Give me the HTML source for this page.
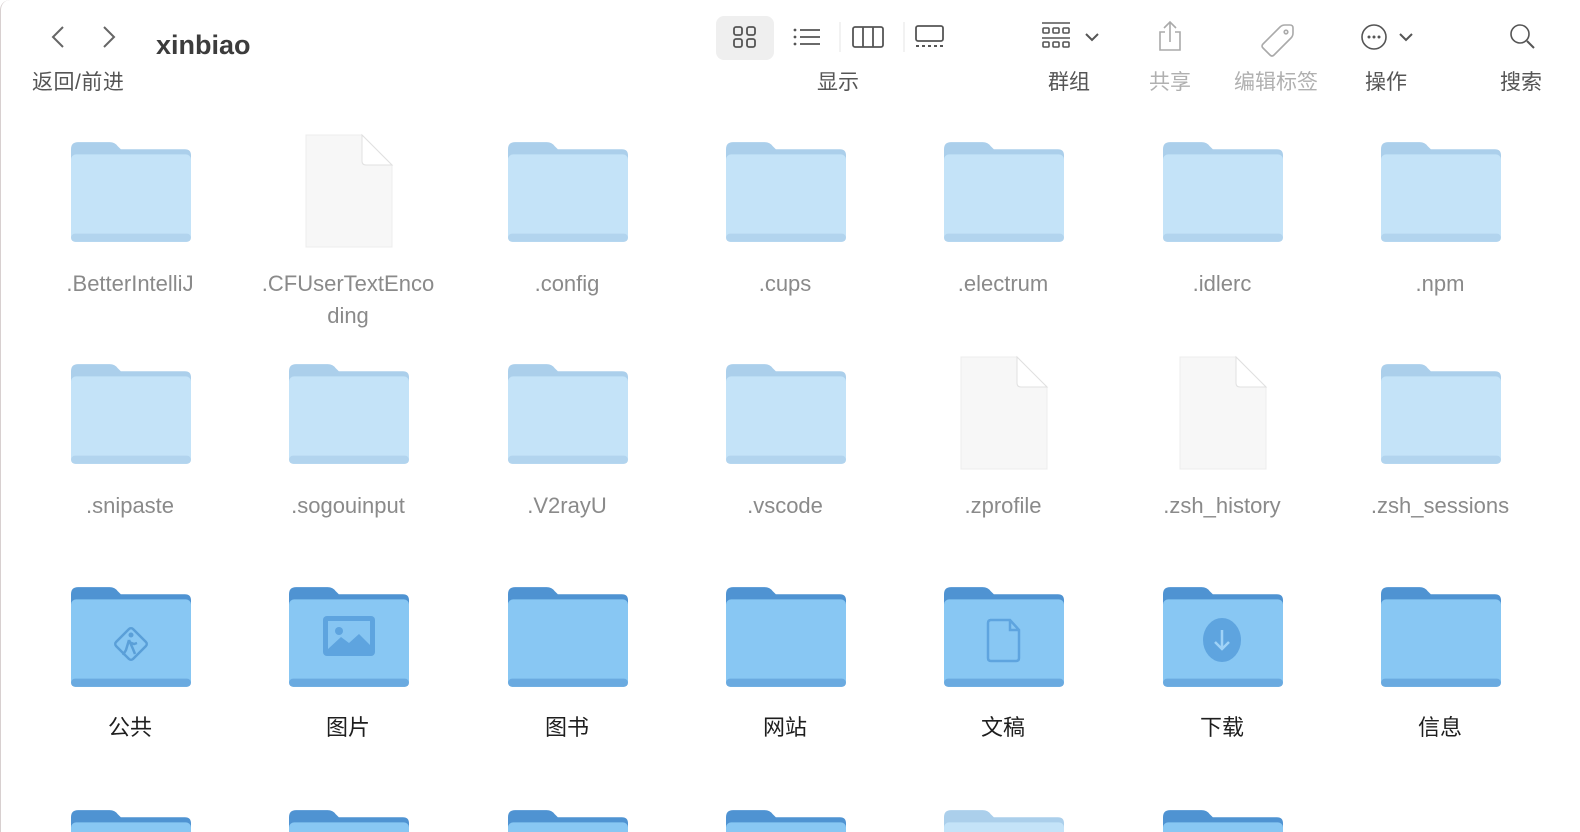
<!DOCTYPE html>
<html><head><meta charset="utf-8"><style>
*{margin:0;padding:0;box-sizing:border-box}
html,body{width:1580px;height:832px;overflow:hidden}
body{background:#fff;position:relative;font-family:"Liberation Sans","Noto Sans CJK SC",sans-serif}
.win{position:absolute;left:0;top:0;width:1580px;height:832px;border-left:1px solid #d8d0d0;border-top-left-radius:10px}
.a{position:absolute}
.lbl{position:absolute;width:200px;text-align:center;font-size:22px;line-height:32px}
.g{color:#8a8a8a}.d{color:#1e1e1e}
.tl{position:absolute;font-size:20px;color:#555;text-align:center;width:100px}
</style></head><body><div class="win"></div>
<svg width="0" height="0" style="position:absolute">
<defs>
<symbol id="fl" viewBox="0 0 118 104">
<path d="M0,9 Q0,2 7,2 H38 Q43,2 46,6 L49,9 H112 Q118,9 118,15 V92 H0 Z" fill="#abcfeb"/>
<rect x="0" y="14" width="118" height="86" rx="5" fill="#c4e3f8"/>
<rect x="0" y="92" width="118" height="8" rx="4" fill="#b2d4ee"/>
</symbol>
<symbol id="fd" viewBox="0 0 118 104">
<path d="M0,9 Q0,2 7,2 H38 Q43,2 46,6 L49,9 H112 Q118,9 118,15 V92 H0 Z" fill="#4f93d2"/>
<rect x="0" y="14" width="118" height="86" rx="5" fill="#88c7f3"/>
<rect x="0" y="92" width="118" height="8" rx="4" fill="#6aaae0"/>
</symbol>
<symbol id="doc" viewBox="0 0 90 116">
<path d="M2,2 H58 L88,32 V114 H2 Z" fill="#f7f7f7" stroke="#ececec"/>
<path d="M58,2 V28 Q58,32 62,32 H88 Z" fill="#fff" stroke="#e0e0e0"/>
</symbol>
</defs></svg>

<!-- toolbar -->
<svg class="a" style="left:46px;top:24px" width="80" height="28"><path d="M17,3 L7,13 L17,23" stroke="#666" stroke-width="2" fill="none"/><path d="M58,3 L68,13 L58,23" stroke="#666" stroke-width="2" fill="none"/></svg>
<div class="a" style="left:156px;top:30px;font-size:27px;font-weight:bold;color:#3c3c3c">xinbiao</div>
<div class="a" style="left:32px;top:66px;font-size:21px;color:#555;letter-spacing:0.5px">返回/前进</div>

<div class="a" style="left:716px;top:16px;width:58px;height:44px;background:#efefef;border-radius:8px"></div>
<svg class="a" style="left:700px;top:0" width="260" height="70">
<g stroke="#555" stroke-width="1.8" fill="none">
<rect x="34" y="27" width="8" height="8" rx="2"/><rect x="47" y="27" width="8" height="8" rx="2"/><rect x="34" y="39" width="8" height="8" rx="2"/><rect x="47" y="39" width="8" height="8" rx="2"/>
<path d="M100,30 H120 M100,37 H120 M100,44 H120"/>
<rect x="153" y="27" width="30" height="20" rx="2"/><path d="M163,27 V47 M173,27 V47"/>
<rect x="216" y="26" width="27" height="15" rx="2"/>
</g>
<g fill="#555"><circle cx="95" cy="30" r="1.4"/><circle cx="95" cy="37" r="1.4"/><circle cx="95" cy="44" r="1.4"/>
<rect x="216" y="45" width="3" height="2"/><rect x="222" y="45" width="3" height="2"/><rect x="228" y="45" width="3" height="2"/><rect x="234" y="45" width="3" height="2"/><rect x="240" y="45" width="3" height="2"/></g>
<path d="M140,22 V52 M204,22 V52" stroke="#e6e6e6"/>
</svg>
<div class="tl" style="left:788px;top:66px;font-size:21px">显示</div>

<svg class="a" style="left:1030px;top:14px" width="530" height="50">
<g stroke="#555" stroke-width="1.6" fill="none">
<path d="M12,9 H40 M12,24 H40"/>
<rect x="13" y="14" width="6" height="5" rx="1"/><rect x="23" y="14" width="6" height="5" rx="1"/><rect x="33" y="14" width="6" height="5" rx="1"/>
<rect x="13" y="28" width="6" height="5" rx="1"/><rect x="23" y="28" width="6" height="5" rx="1"/><rect x="33" y="28" width="6" height="5" rx="1"/>
<path d="M56,20 L62,26 L68,20" stroke-width="2"/>
</g>
<g stroke="#aaa" stroke-width="1.6" fill="none">
<path d="M140,8 V28 M134,14 L140,8 L146,14 M135,18 H130 V36 H150 V18 H145"/>
<path d="M233,30 L250,13 Q252,11 255,11 L260,11 Q263,11 263,14 V19 Q263,22 261,24 L244,41 Q242,43 240,41 L233,34 Q231,32 233,30 Z"/>
<circle cx="256" cy="18" r="1.8"/>
</g>
<g stroke="#555" stroke-width="1.6" fill="none">
<circle cx="344" cy="23" r="12"/><path d="M370,20 L376,26 L382,20" stroke-width="2"/>
<circle cx="490" cy="20" r="9"/><path d="M497,27 L504,34" stroke-width="2"/>
</g>
<g fill="#555"><circle cx="339" cy="23" r="1.5"/><circle cx="344" cy="23" r="1.5"/><circle cx="349" cy="23" r="1.5"/></g>
</svg>
<div class="tl" style="left:1019px;top:66px;font-size:21px">群组</div>
<div class="tl" style="left:1120px;top:66px;color:#b0b0b0;font-size:21px">共享</div>
<div class="tl" style="left:1216px;top:66px;color:#b0b0b0;font-size:21px;width:120px">编辑标签</div>
<div class="tl" style="left:1336px;top:66px;font-size:21px">操作</div>
<div class="tl" style="left:1471px;top:66px;font-size:21px">搜索</div>

<!-- row 1 -->
<svg class="a" style="left:71px;top:140px" width="120" height="106"><use href="#fl"/></svg>
<svg class="a" style="left:304px;top:133px" width="90" height="116"><use href="#doc"/></svg>
<svg class="a" style="left:508px;top:140px" width="120" height="106"><use href="#fl"/></svg>
<svg class="a" style="left:726px;top:140px" width="120" height="106"><use href="#fl"/></svg>
<svg class="a" style="left:944px;top:140px" width="120" height="106"><use href="#fl"/></svg>
<svg class="a" style="left:1163px;top:140px" width="120" height="106"><use href="#fl"/></svg>
<svg class="a" style="left:1381px;top:140px" width="120" height="106"><use href="#fl"/></svg>
<div class="lbl g" style="left:30px;top:268px">.BetterIntelliJ</div>
<div class="lbl g" style="left:248px;top:268px">.CFUserTextEnco<br>ding</div>
<div class="lbl g" style="left:467px;top:268px">.config</div>
<div class="lbl g" style="left:685px;top:268px">.cups</div>
<div class="lbl g" style="left:903px;top:268px">.electrum</div>
<div class="lbl g" style="left:1122px;top:268px">.idlerc</div>
<div class="lbl g" style="left:1340px;top:268px">.npm</div>

<!-- row 2 -->
<svg class="a" style="left:71px;top:362px" width="120" height="106"><use href="#fl"/></svg>
<svg class="a" style="left:289px;top:362px" width="120" height="106"><use href="#fl"/></svg>
<svg class="a" style="left:508px;top:362px" width="120" height="106"><use href="#fl"/></svg>
<svg class="a" style="left:726px;top:362px" width="120" height="106"><use href="#fl"/></svg>
<svg class="a" style="left:959px;top:355px" width="90" height="116"><use href="#doc"/></svg>
<svg class="a" style="left:1178px;top:355px" width="90" height="116"><use href="#doc"/></svg>
<svg class="a" style="left:1381px;top:362px" width="120" height="106"><use href="#fl"/></svg>
<div class="lbl g" style="left:30px;top:490px">.snipaste</div>
<div class="lbl g" style="left:248px;top:490px">.sogouinput</div>
<div class="lbl g" style="left:467px;top:490px">.V2rayU</div>
<div class="lbl g" style="left:685px;top:490px">.vscode</div>
<div class="lbl g" style="left:903px;top:490px">.zprofile</div>
<div class="lbl g" style="left:1122px;top:490px">.zsh_history</div>
<div class="lbl g" style="left:1340px;top:490px">.zsh_sessions</div>

<!-- row 3 -->
<svg class="a" style="left:71px;top:585px" width="120" height="106"><use href="#fd"/>
<g stroke="#5a9fd8" stroke-width="2.5" fill="none"><rect x="48" y="47" width="24" height="24" rx="3" transform="rotate(45 60 59)"/><path d="M58,55 L55,65 L52,70 M58,55 L62,64 L64,69 M58,57 L63,59 L66,58"/></g><circle cx="60" cy="50" r="2.5" fill="#5a9fd8"/></svg>
<svg class="a" style="left:289px;top:585px" width="120" height="106"><use href="#fd"/>
<rect x="34" y="31" width="52" height="40" rx="4" fill="#5ea4df"/><rect x="39" y="36" width="42" height="28" fill="#86c5f2"/><circle cx="50" cy="46" r="4" fill="#5ea4df"/><path d="M39,64 L52,52 L60,58 L70,49 L81,60 V64 Z" fill="#5ea4df"/></svg>
<svg class="a" style="left:508px;top:585px" width="120" height="106"><use href="#fd"/></svg>
<svg class="a" style="left:726px;top:585px" width="120" height="106"><use href="#fd"/></svg>
<svg class="a" style="left:944px;top:585px" width="120" height="106"><use href="#fd"/>
<path d="M46,35 H66 L75,45 V73 Q75,76 72,76 H47 Q44,76 44,73 V38 Q44,35 47,35 Z M66,35 V45 H75" stroke="#5ea4df" stroke-width="2.5" fill="none"/></svg>
<svg class="a" style="left:1163px;top:585px" width="120" height="106"><use href="#fd"/>
<ellipse cx="59" cy="55" rx="19" ry="22" fill="#5ea4df"/><path d="M59,45 V63 M52,57 L59,64 L66,57" stroke="#9fd2f7" stroke-width="2.5" fill="none"/></svg>
<svg class="a" style="left:1381px;top:585px" width="120" height="106"><use href="#fd"/></svg>
<div class="lbl d" style="left:30px;top:712px">公共</div>
<div class="lbl d" style="left:248px;top:712px">图片</div>
<div class="lbl d" style="left:467px;top:712px">图书</div>
<div class="lbl d" style="left:685px;top:712px">网站</div>
<div class="lbl d" style="left:903px;top:712px">文稿</div>
<div class="lbl d" style="left:1122px;top:712px">下载</div>
<div class="lbl d" style="left:1340px;top:712px">信息</div>

<!-- row 4 -->
<svg class="a" style="left:71px;top:808px" width="120" height="24"><use href="#fd" width="120" height="106"/></svg>
<svg class="a" style="left:289px;top:808px" width="120" height="24"><use href="#fd" width="120" height="106"/></svg>
<svg class="a" style="left:508px;top:808px" width="120" height="24"><use href="#fd" width="120" height="106"/></svg>
<svg class="a" style="left:726px;top:808px" width="120" height="24"><use href="#fd" width="120" height="106"/></svg>
<svg class="a" style="left:944px;top:808px" width="120" height="24"><use href="#fl" width="120" height="106"/></svg>
<svg class="a" style="left:1163px;top:808px" width="120" height="24"><use href="#fd" width="120" height="106"/></svg>
</body></html>
